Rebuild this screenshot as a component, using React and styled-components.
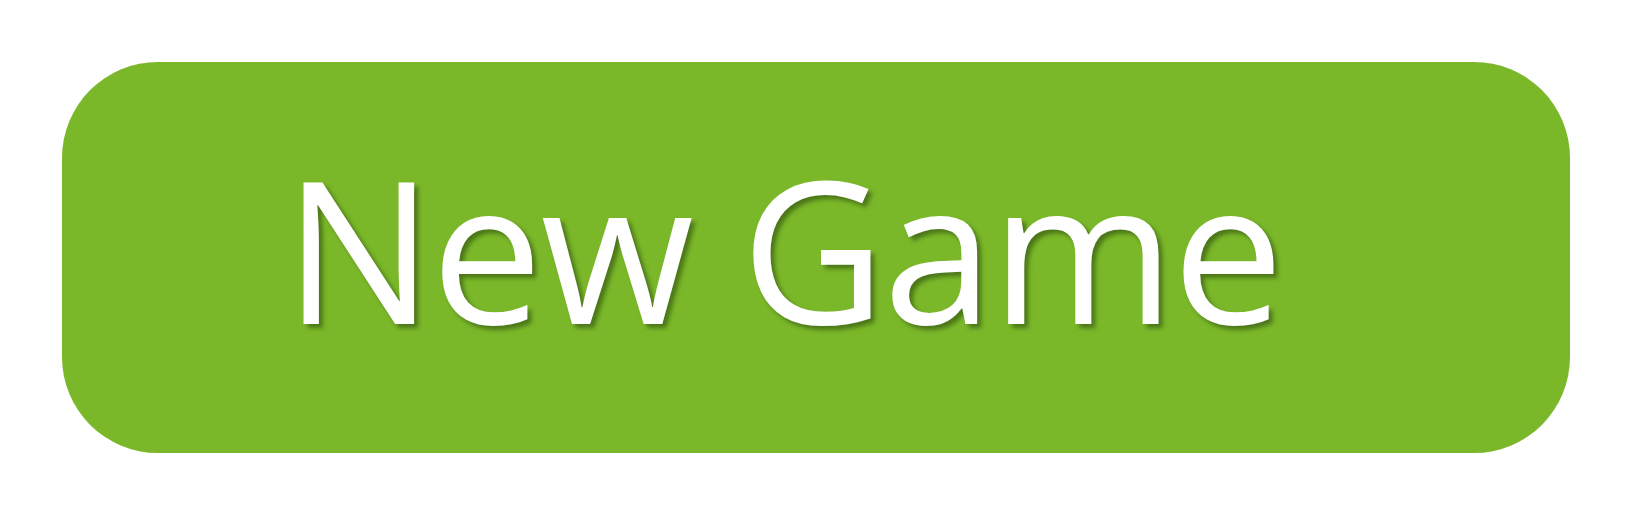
import React from 'react';
import styled, { createGlobalStyle } from 'styled-components';

const GlobalStyle = createGlobalStyle`
  html, body, #root {
    margin: 0;
    padding: 0;
    height: 100%;
    background: #ffffff;
  }
`;

const Page = styled.div`
  box-sizing: border-box;
  display: flex;
  height: 100vh;
  padding: 62px;
`;

const Button = styled.button`
  flex: 1;
  display: flex;
  align-items: center;
  justify-content: center;
  box-sizing: border-box;
  padding: 0 66px 21px 0;
  border: none;
  border-radius: 96px;
  background: #7ab829;
  color: #ffffff;
  font-family: 'Open Sans', sans-serif;
  font-size: 198px;
  font-weight: 400;
  letter-spacing: -2px;
  text-shadow: 4px 4px 4px rgba(45, 75, 15, 0.6);
  cursor: pointer;
`;

const App = () => {
  return (
    <Page>
      <GlobalStyle />
      <Button>New Game</Button>
    </Page>
  );
};

export default App;
